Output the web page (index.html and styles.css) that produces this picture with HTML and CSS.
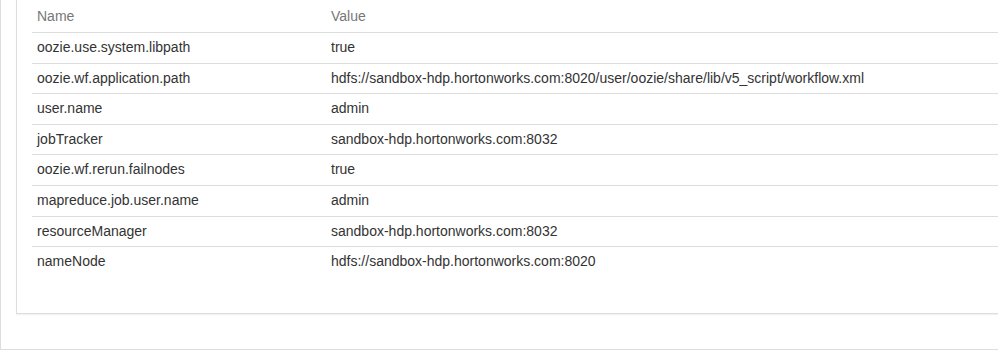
FILE: index.html
```html
<!DOCTYPE html>
<html>
<head>
<meta charset="utf-8">
<link rel="stylesheet" href="styles.css">
</head>
<body>
<div class="outer">
  <div class="inner">
    <table class="props">
      <thead>
        <tr><th class="col-name">Name</th><th>Value</th></tr>
      </thead>
      <tbody>
        <tr><td>oozie.use.system.libpath</td><td>true</td></tr>
        <tr><td>oozie.wf.application.path</td><td>hdfs://sandbox-hdp.hortonworks.com:8020/user/oozie/share/lib/v5_script/workflow.xml</td></tr>
        <tr><td>user.name</td><td>admin</td></tr>
        <tr><td>jobTracker</td><td>sandbox-hdp.hortonworks.com:8032</td></tr>
        <tr><td>oozie.wf.rerun.failnodes</td><td>true</td></tr>
        <tr><td>mapreduce.job.user.name</td><td>admin</td></tr>
        <tr><td>resourceManager</td><td>sandbox-hdp.hortonworks.com:8032</td></tr>
        <tr><td>nameNode</td><td>hdfs://sandbox-hdp.hortonworks.com:8020</td></tr>
      </tbody>
    </table>
  </div>
</div>
</body>
</html>
```

FILE: styles.css
```css
html, body {
  margin: 0;
  padding: 0;
  background: #fff;
  overflow: hidden;
}
body {
  font-family: "Liberation Sans", Arial, sans-serif;
  font-size: 14px;
  color: #333;
}
.outer {
  margin-top: -28.6px;
  border-left: 1px solid #ddd;
  border-bottom: 1px solid #ddd;
  padding: 15px 0 35px 15px;
  background: #fff;
}
.inner {
  border: 1px solid #ddd;
  border-right: none;
  padding: 15px 0 36px 15px;
  box-shadow: 0 1px 1px rgba(0,0,0,.05);
  background: #fff;
}
.props {
  width: 100%;
  border-collapse: collapse;
  border-spacing: 0;
}
.props th,
.props td {
  text-align: left;
  padding: 5px;
  line-height: 19.6px;
  vertical-align: top;
  font-weight: normal;
}
.props th {
  color: #777;
  border-bottom: 1px solid #ddd;
}
.props .col-name {
  width: 284px;
}
.props tbody tr + tr td {
  border-top: 1px solid #ddd;
}
```
